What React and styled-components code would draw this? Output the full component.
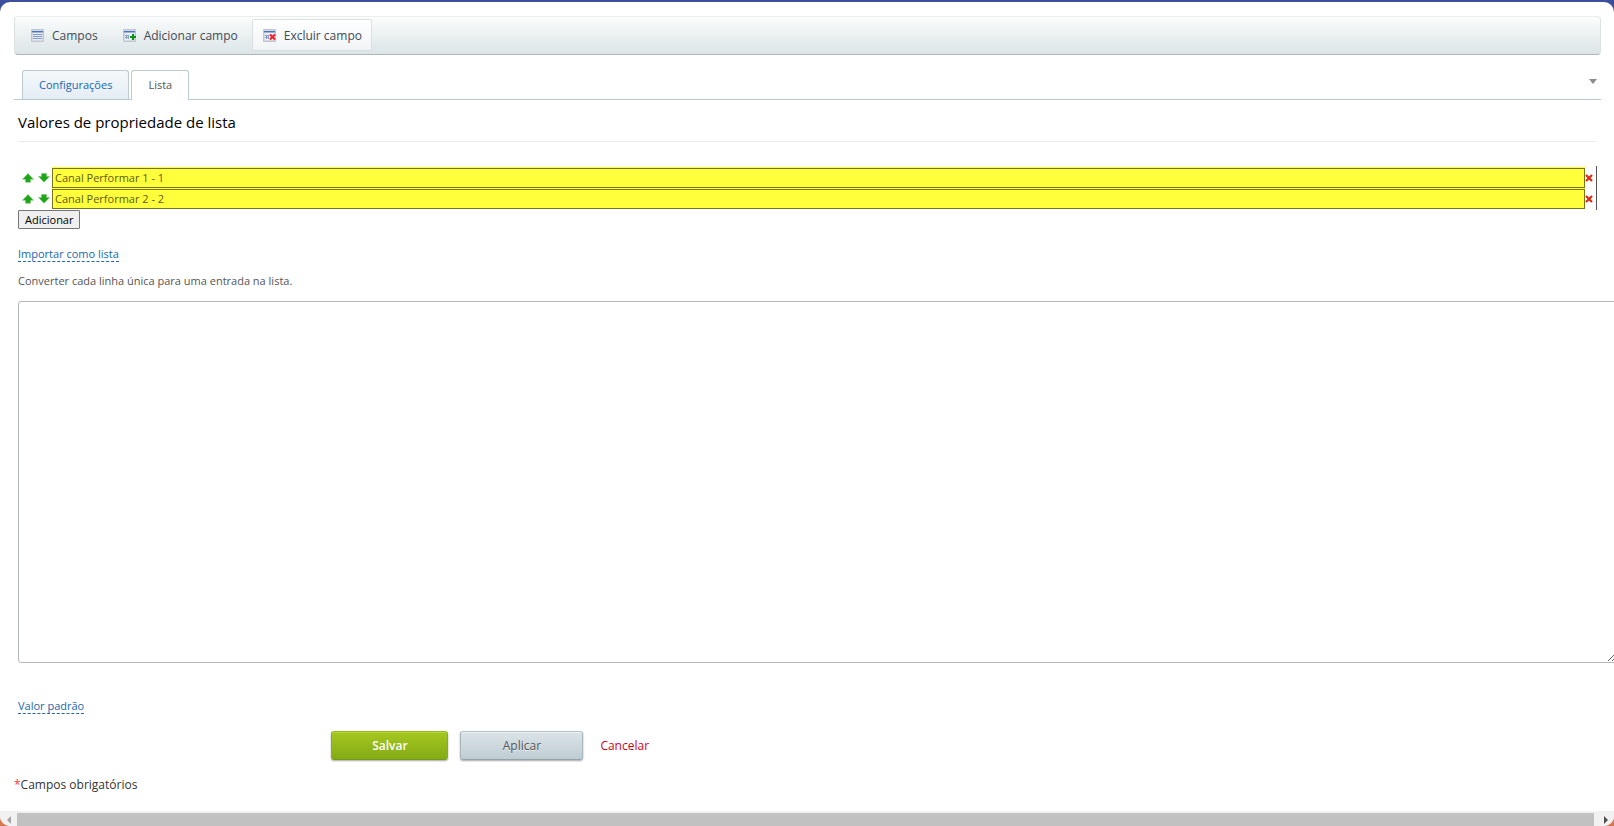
import { useState } from "react";
import styled, { createGlobalStyle } from "styled-components";

const COLORS = {
  text: "#3f4b54",
  muted: "#555",
  link: "#2067b0",
  line: "#b9cbce",
  danger: "#d0021b",
};

const FONT = '"Open Sans", "Noto Sans", sans-serif';

const GlobalStyle = createGlobalStyle`
  *, *::before, *::after {
    box-sizing: border-box;
  }

  body {
    margin: 0;
    font-family: ${FONT};
    font-size: 12px;
    color: ${COLORS.muted};
    overflow: hidden;
  }

  button, input, textarea {
    font-family: inherit;
  }
`;

const GridIcon = ({ kind }) => (
  <Icon width="13" height="13" viewBox="0 0 13 13" shapeRendering="crispEdges" aria-hidden="true">
    <rect width="13" height="13" rx="1" fill="#c3c5ca" shapeRendering="auto" />
    <rect x="1" y="1" width="11" height="11" fill="#d3d8e2" />
    <rect x="2" y="2" width="9" height="9" fill="#e9eef8" />
    <rect x="1" y="2" width="11" height="1" fill="#4a74bd" />
    <rect x="1" y="3" width="11" height="1" fill="#9db3dc" />
    {kind === "list" ? (
      <path d="M2 5.500h9M2 7.500h9M2 9.500h9" stroke="#7f98cc" />
    ) : (
      <path d="M2 6.500h4M2 8.500h4M3.500 6v4M5.500 6v4" stroke="#8b9cc4" />
    )}
    {kind === "add" && <path d="M10 5v6M7 8h6" stroke="#0b9410" strokeWidth="2" />}
    {kind === "delete" && (
      <path
        d="M7 5.500l5 5M12 5.500l-5 5"
        stroke="#f0202a"
        strokeWidth="2"
        shapeRendering="geometricPrecision"
      />
    )}
  </Icon>
);

const Arrow = ({ down }) => (
  <svg width="12" height="10" viewBox="0 0 12 10" aria-hidden="true">
    <path
      d={down ? "M3.500 .5h5v3h3L6 9.300 .5 3.500h3z" : "M3.500 9.300h5v-3h3L6 .5 .5 6.300h3z"}
      fill="#1fa51b"
      stroke="#6fc75f"
      strokeWidth=".5"
      strokeLinejoin="round"
    />
  </svg>
);

const Cross = () => (
  <svg width="8" height="8" viewBox="0 0 8 8" aria-hidden="true">
    <path d="M1 1l6 6M7 1L1 7" stroke="#dd2a10" strokeWidth="2.200" />
  </svg>
);

const TOOLS = [
  { kind: "list", label: "Campos" },
  { kind: "add", label: "Adicionar campo" },
  { kind: "delete", label: "Excluir campo", active: true },
];

const App = () => {
  const [values, setValues] = useState(["Canal Performar 1 - 1", "Canal Performar 2 - 2"]);

  const move = (from, to) => {
    if (to < 0 || to >= values.length) return;
    const next = [...values];
    [next[from], next[to]] = [next[to], next[from]];
    setValues(next);
  };

  const change = (index, value) => setValues(values.map((v, i) => (i === index ? value : v)));

  return (
    <Backdrop>
      <GlobalStyle />
      <Page>
        <Main>
          <Toolbar>
            {TOOLS.map(({ kind, label, active }) => (
              <Tool key={kind} $active={active}>
                <GridIcon kind={kind} />
                {label}
              </Tool>
            ))}
          </Toolbar>

          <Tabs>
            <Tab>Configurações</Tab>
            <Tab $selected>Lista</Tab>
            <Toggle aria-label="Expandir">
              <svg width="8" height="5" viewBox="0 0 8 5" aria-hidden="true">
                <path d="M0 0h8L4 5z" fill="#8c8c8c" />
              </svg>
            </Toggle>
          </Tabs>

          <Content>
            <Title>Valores de propriedade de lista</Title>
            <Values>
              {values.map((value, i) => (
                <ValueRow key={i}>
                  <IconButton aria-label="Mover para cima" onClick={() => move(i, i - 1)}>
                    <Arrow />
                  </IconButton>
                  <IconButton aria-label="Mover para baixo" onClick={() => move(i, i + 1)}>
                    <Arrow down />
                  </IconButton>
                  <ValueInput
                    aria-label="Valor"
                    value={value}
                    onChange={(e) => change(i, e.target.value)}
                  />
                  <RemoveButton
                    aria-label="Remover"
                    onClick={() => setValues(values.filter((_, j) => j !== i))}
                  >
                    <Cross />
                  </RemoveButton>
                </ValueRow>
              ))}
            </Values>
            <AddButton onClick={() => setValues([...values, ""])}>Adicionar</AddButton>

            <ImportBlock>
              <DashedLink href="#importar">Importar como lista</DashedLink>
              <Hint htmlFor="import">Converter cada linha única para uma entrada na lista.</Hint>
              <ImportArea id="import" />
            </ImportBlock>

            <DashedLink href="#padrao">Valor padrão</DashedLink>
          </Content>

          <Actions>
            <SaveButton>Salvar</SaveButton>
            <ApplyButton>Aplicar</ApplyButton>
            <CancelLink href="#cancelar">Cancelar</CancelLink>
          </Actions>

          <Required>
            <span>*</span>Campos obrigatórios
          </Required>
        </Main>

        <ScrollBar>
          <ScrollButton aria-label="Rolar para a esquerda">
            <svg width="4" height="8" viewBox="0 0 4 8" aria-hidden="true">
              <path d="M4 0v8L0 4z" fill="#a3a3a3" />
            </svg>
          </ScrollButton>
          <ScrollThumb />
          <ScrollButton aria-label="Rolar para a direita">
            <svg width="4" height="8" viewBox="0 0 4 8" aria-hidden="true">
              <path d="M0 0v8l4-4z" fill="#505050" />
            </svg>
          </ScrollButton>
        </ScrollBar>
      </Page>
    </Backdrop>
  );
};

const Backdrop = styled.div`
  min-height: 100vh;
  padding-top: 2px;
  display: flex;
  background: linear-gradient(#3c4f9c, #3c4f9c 50%, #d9764f 50%);
`;

const Page = styled.div`
  flex: 1;
  min-width: 0;
  display: flex;
  flex-direction: column;
  overflow: hidden;
  background: #fff;
  border-radius: 10px;
`;

const Main = styled.main`
  flex: 1;
  padding: 14px 13px 0 14px;
`;

const Toolbar = styled.div`
  display: flex;
  gap: 4px;
  height: 39px;
  padding: 2px 5px;
  border: 1px solid #dbe0e1;
  border-bottom-color: #b0b5b7;
  border-top-color: #eceeee;
  border-radius: 4px;
  background: linear-gradient(#fbfcfc, #dbe5e8);
`;

const Tool = styled.button`
  display: flex;
  align-items: center;
  gap: 8px;
  height: 32px;
  padding: 0 9px 0 10px;
  border: 1px solid ${({ $active }) => ($active ? "#dcdfe0" : "transparent")};
  border-radius: 2px;
  background: ${({ $active }) => ($active ? "linear-gradient(#fff, #f1f4f6)" : "none")};
  color: ${COLORS.text};
  font-size: 12px;
`;

const Icon = styled.svg`
  flex: none;
`;

const Tabs = styled.div`
  display: flex;
  align-items: flex-end;
  gap: 2px;
  height: 30px;
  margin-top: 15px;
  padding: 0 4px 0 8px;
  border-bottom: 1px solid ${COLORS.line};
`;

const Tab = styled.button`
  height: ${({ $selected }) => ($selected ? 30 : 29)}px;
  margin-bottom: ${({ $selected }) => ($selected ? -1 : 0)}px;
  padding: 0 16px 2px;
  border: 1px solid ${COLORS.line};
  border-bottom: 0;
  border-radius: 3px 3px 0 0;
  background: ${({ $selected }) => ($selected ? "#fff" : "linear-gradient(#f4f8fa, #e4edf5)")};
  color: ${({ $selected }) => ($selected ? COLORS.muted : COLORS.link)};
  font-size: 11px;
  font-weight: 500;
`;

const Toggle = styled.button`
  display: flex;
  align-self: center;
  margin: 0 0 7px auto;
  padding: 0;
  border: 0;
  background: none;
`;

const Content = styled.div`
  padding: 0 4px;
`;

const Title = styled.h1`
  height: 42px;
  margin: 0;
  border-bottom: 1px solid #ebeded;
  color: #000;
  font-size: 15px;
  font-weight: 400;
  line-height: 44px;
`;

const Values = styled.div`
  margin-top: 24px;
  padding: 1px 0;
  border-right: 1px solid #555;
`;

const ValueRow = styled.div`
  display: flex;
  align-items: center;
  height: 21px;
  padding: 0 3px 0 2px;
`;

const IconButton = styled.button`
  display: flex;
  justify-content: flex-end;
  width: 16px;
  padding: 0 2px 0 0;
  border: 0;
  background: none;
`;

const RemoveButton = styled(IconButton)`
  width: 8px;
  padding: 0;
`;

const ValueInput = styled.input`
  flex: 1;
  min-width: 0;
  height: 20px;
  padding: 0 2px;
  border: 1px solid #77751b;
  border-radius: 0;
  background: #ffff3b;
  box-shadow: 0 -1px #ffff3b;
  color: #5f5b16;
  font-size: 11px;
`;

const AddButton = styled.button`
  display: block;
  height: 19px;
  padding: 0 6px;
  border: 1px solid #767676;
  border-radius: 1px;
  background: #efefef;
  color: #000;
  font-size: 11px;
  line-height: 18px;
`;

const ImportBlock = styled.div`
  margin: 16px 0 34px;
`;

const DashedLink = styled.a`
  display: inline-block;
  border-bottom: 1px dashed ${COLORS.link};
  color: ${COLORS.link};
  font-size: 11px;
  line-height: 15px;
  text-decoration: none;
`;

const Hint = styled.label`
  display: block;
  margin: 10px 0 11px;
  font-size: 11px;
  line-height: 18px;
`;

const ImportArea = styled.textarea`
  display: block;
  width: calc(100% + 20px);
  height: 362px;
  border: 1px solid #b5b8bb;
  border-radius: 3px;
  outline: 0;
`;

const Actions = styled.div`
  display: flex;
  align-items: center;
  gap: 12px;
  margin-top: 17px;
  padding-left: 20%;
`;

const ActionButton = styled.button`
  height: 29px;
  border: 1px solid;
  border-radius: 3px;
  font-size: 12px;
`;

const SaveButton = styled(ActionButton)`
  width: 117px;
  border-color: #97b81c #8cac1a #769a14;
  background: linear-gradient(#a5c71f, #83ab15);
  box-shadow: 0 1px 2px rgba(0, 0, 0, 0.35), inset 0 1px #bad63c;
  color: #fff;
  font-weight: 600;
`;

const ApplyButton = styled(ActionButton)`
  width: 123px;
  border-color: #b7c3c8 #a9b6bc #95a3aa;
  background: linear-gradient(#dbe4e7, #bfcdd3);
  box-shadow: 0 1px 2px rgba(0, 0, 0, 0.35), inset 0 1px #eaf0f2;
  color: ${COLORS.muted};
  text-shadow: 0 1px #e8eef0;
`;

const CancelLink = styled.a`
  margin-left: 5px;
  color: ${COLORS.danger};
  font-size: 12px;
  text-decoration: none;
`;

const Required = styled.p`
  margin: 16px 0 0;
  color: #333;
  font-size: 12px;
  line-height: 18px;

  span {
    color: #f33;
  }
`;

const ScrollBar = styled.div`
  display: flex;
  height: 15px;
  background: #f1f1f1;
`;

const ScrollButton = styled.button`
  display: flex;
  align-items: center;
  justify-content: center;
  width: 17px;
  padding: 2px 0 0;
  border: 0;
  background: none;
`;

const ScrollThumb = styled.div`
  flex: 1;
  margin-top: 2px;
  margin-right: 3px;
  background: #c1c1c1;
`;

export default App;
